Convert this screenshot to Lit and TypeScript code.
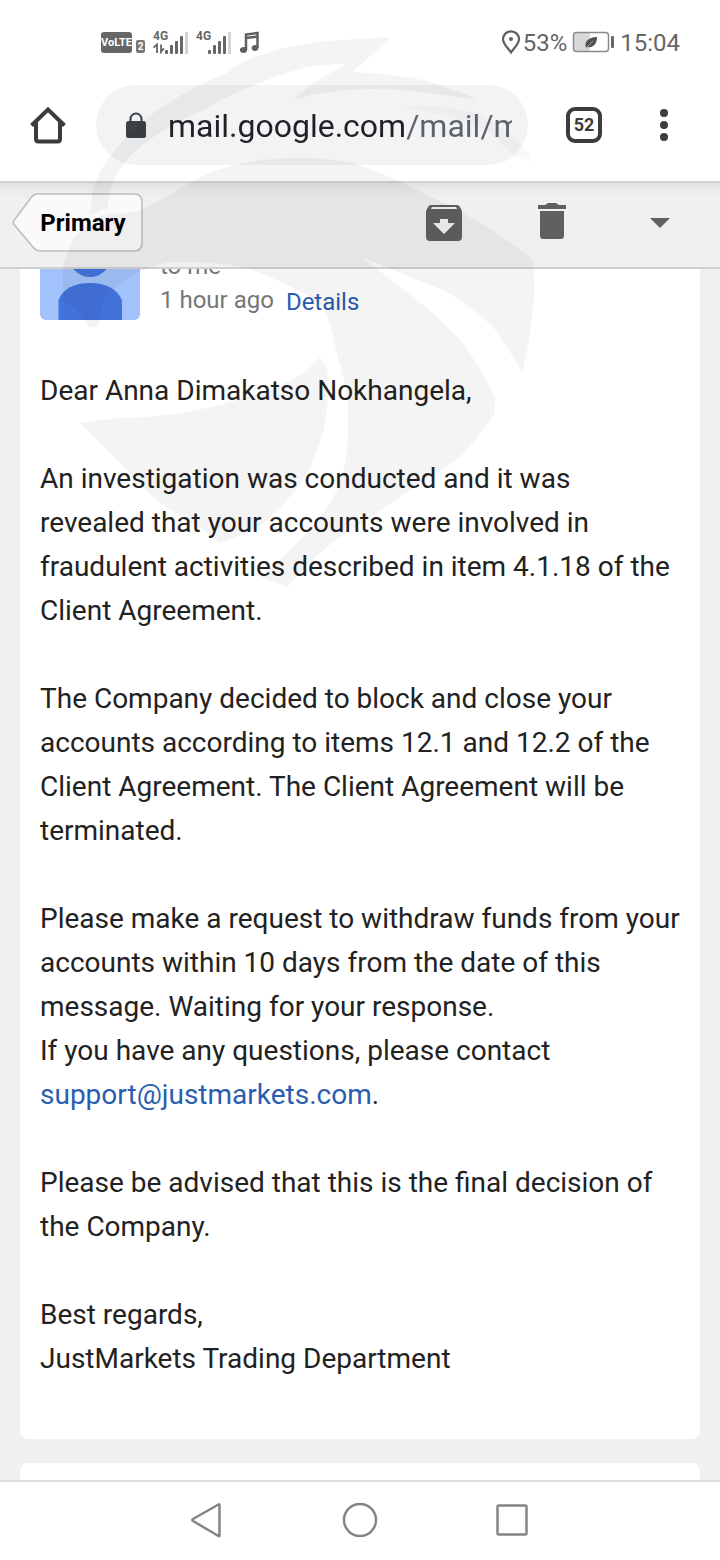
import { LitElement, html, css, svg } from "lit";
import { customElement } from "lit/decorators.js";

@customElement("status-bar")
class StatusBar extends LitElement {
  static styles = css`
    :host {
      display: flex;
      align-items: center;
      justify-content: space-between;
      height: 85px;
      box-sizing: border-box;
      padding: 0 40px 0 101px;
      color: #666;
      font-size: 24px;
      line-height: 28px;
    }
    .group { display: flex; align-items: center; }
    .left { gap: 8px; }
    .right { gap: 5px; }
    .place { gap: 1px; }
    .volte { display: flex; align-items: flex-end; gap: 4px; }
    .badge {
      background: #666;
      color: #fff;
      border-radius: 3px;
      width: 31px;
      font: 700 11px/21px Roboto, sans-serif;
      text-align: center;
    }
    .slot {
      background: #777;
      color: #fff;
      border-radius: 2px;
      width: 9px;
      font: 700 10px/13px Roboto, sans-serif;
      text-align: center;
    }
    svg { display: block; }
    .net { font: 700 12px Roboto, sans-serif; fill: #666; }
  `;

  private signal(data: boolean) {
    return svg`
      <text class="net" x="0" y="10">4G</text>
      ${data
        ? svg`<path d="M.5 17.500L4 14.500V23M8 14.500v9M7.500 22l3.500-3.500" fill="none" stroke="#666" stroke-width="1.800"/>`
        : null}
      <g fill="#666">
        <rect x="12" y="20" width="3" height="4" rx="1"/>
        <rect x="17" y="15" width="3" height="9" rx="1"/>
        <rect x="22" y="11" width="3" height="13" rx="1"/>
        <rect x="27" y="6" width="3" height="18" rx="1"/>
      </g>
      <rect x="32" y="2" width="3" height="22" fill="#d4d4d4"/>`;
  }

  render() {
    return html`
      <div class="group left">
        <span class="volte"><span class="badge">VoLTE</span><span class="slot">2</span></span>
        <svg width="35" height="26" viewBox="0 0 35 26">${this.signal(true)}</svg>
        <svg width="35" height="26" viewBox="0 0 35 26">${this.signal(false)}</svg>
        <svg width="21" height="24" viewBox="0 0 21 24" fill="none" stroke="#5f5f5f">
          <path d="M7 19V3.500L18.500 2v15M7 7l11.500-1.500" stroke-width="2.500"/>
          <ellipse cx="4.500" cy="19" rx="3.200" ry="2.500" fill="#5f5f5f"/>
          <ellipse cx="16" cy="17" rx="3" ry="2.500" fill="#5f5f5f"/>
        </svg>
      </div>
      <div class="group right">
        <div class="group place">
          <svg width="22" height="26" viewBox="0 0 22 26">
            <path d="M11 22.500C8 18 3 14 3 9.300a8 8 0 0 1 16 0C19 14 14 18 11 22.500z" fill="none" stroke="#606060" stroke-width="2.200"/>
            <circle cx="11" cy="9" r="2" fill="#606060"/>
          </svg>
          <span>53%</span>
        </div>
        <svg width="43" height="24" viewBox="0 0 43 24">
          <rect x="2" y="2" width="16" height="18" rx="2" fill="#d8d8d8"/>
          <rect x="1.500" y="1.500" width="35" height="19" rx="3" fill="none" stroke="#8a8a8a" stroke-width="1.500"/>
          <rect x="39" y="5" width="3" height="12" rx="1" fill="#666"/>
          <path d="M14 17c-2-6 2-11 11-11 0 7-4 11-9 10z" fill="#505050"/>
          <path d="M13.500 17.500L21 10" stroke="#aaa" fill="none"/>
        </svg>
        <span>15:04</span>
      </div>`;
  }
}

@customElement("browser-bar")
class BrowserBar extends LitElement {
  static styles = css`
    :host {
      display: flex;
      align-items: center;
      height: 96px;
      box-sizing: border-box;
      padding: 0 36px 16px 28px;
    }
    button {
      border: 0;
      padding: 0;
      background: none;
      display: flex;
      justify-content: center;
      align-items: center;
      height: 40px;
      width: 40px;
      flex: none;
    }
    .pill {
      flex: 1;
      min-width: 0;
      display: flex;
      align-items: center;
      gap: 20px;
      height: 80px;
      box-sizing: border-box;
      border-radius: 40px;
      background: #f1f3f4;
      padding: 0 16px 0 28px;
      margin-left: 28px;
      margin-right: 38px;
    }
    .pill svg { flex: none; }
    input {
      flex: 1;
      min-width: 0;
      height: 44px;
      border: 0;
      padding: 2px 0 0;
      box-sizing: border-box;
      outline: 0;
      color: transparent;
      background: linear-gradient(90deg, #202124 236px, #5f6368 236px);
      background-clip: text;
      -webkit-background-clip: text;
      font: 32px/42px Roboto, sans-serif;
    }
    .tabs {
      width: 36px;
      height: 36px;
      box-sizing: border-box;
      border: 4px solid #3c3c3c;
      border-radius: 9px;
      color: #3c3c3c;
      font: 700 18px/28px Roboto, sans-serif;
    }
    .more { margin-left: 42px; }
  `;

  render() {
    return html`
      <button aria-label="Home">
        <svg width="40" height="40" viewBox="0 0 40 40" fill="none" stroke="#3c3c3c" stroke-width="4">
          <path d="M3.500 20.500L20 4.500l16.500 16"/>
          <path d="M8 17v17q0 2.500 2.500 2.500h19q2.500 0 2.500-2.500V17"/>
        </svg>
      </button>
      <div class="pill">
        <svg width="24" height="28" viewBox="0 0 24 28">
          <rect x="2" y="10" width="20" height="17" rx="2.500" fill="#3c4043"/>
          <path d="M6.500 11V8a5.500 5.500 0 0 1 11 0v3" fill="none" stroke="#3c4043" stroke-width="2"/>
        </svg>
        <input aria-label="Address" value="mail.google.com/mail/m" />
      </div>
      <button class="tabs" aria-label="52 open tabs">52</button>
      <button class="more" aria-label="More">
        <svg width="10" height="34" viewBox="0 0 10 34" fill="#3c3c3c">
          <circle cx="5" cy="5" r="4"/><circle cx="5" cy="17" r="4"/><circle cx="5" cy="29" r="4"/>
        </svg>
      </button>`;
  }
}

@customElement("mail-toolbar")
class MailToolbar extends LitElement {
  static styles = css`
    :host {
      display: flex;
      align-items: center;
      height: 88px;
      box-sizing: border-box;
      padding: 0 40px 2px 12px;
      border-bottom: 2px solid #cfcfcf;
      background: linear-gradient(#cbcbcb 0, #e2e2e2 3px, #ececec 10px, #f0f0f0 18px);
    }
    button {
      border: 0;
      padding: 0;
      background: none;
      flex: none;
      height: 60px;
      width: 40px;
      display: grid;
      place-items: center;
    }
    svg { display: block; }
    .back {
      width: 132px;
      margin-right: auto;
      font: 700 24px/28px Roboto, sans-serif;
      color: #000;
    }
    .back svg, .back span { grid-area: 1 / 1; }
    .back span { padding-left: 10px; }
    .archive, .trash { margin-right: 68px; }
  `;

  render() {
    return html`
      <button class="back">
        <svg width="132" height="60" viewBox="0 0 132 60">
          <path d="M25 1h97q8 0 8 8v41q0 8-8 8H29q-5 0-8-4L2 31.500q-1.500-2 0-4L18 6q3.500-5 7-5z" fill="#fafafa" stroke="#bdbdbd" stroke-width="1.500"/>
        </svg>
        <span>Primary</span>
      </button>
      <button class="archive" aria-label="Archive">
        <svg width="36" height="36" viewBox="0 0 36 36">
          <path d="M5 0h26q2 0 3 2l2 4v26q0 4-4 4H4q-4 0-4-4V6l2-4q1-2 3-2z" fill="#606060"/>
          <path d="M6 2h24l1 2H5zM14 14h8v4h7L18 29 7 18h7z" fill="#f3f3f3"/>
        </svg>
      </button>
      <button class="trash" aria-label="Delete">
        <svg width="28" height="40" viewBox="0 0 28 40" fill="#606060">
          <path d="M0 2h7l3-2h8l3 2h7v4H0zM2 8h24v25q0 3-3 3H5q-3 0-3-3z"/>
        </svg>
      </button>
      <button aria-label="More actions">
        <svg width="20" height="10" viewBox="0 0 20 10"><path d="M0 0h20L10 10z" fill="#606060"/></svg>
      </button>`;
  }
}

@customElement("mail-message")
class MailMessage extends LitElement {
  static styles = css`
    :host {
      display: block;
      background: #fff;
      border-radius: 0 0 8px 8px;
      padding: 0 20px 58px;
      color: #222;
      font-size: 28px;
      line-height: 44px;
    }
    .head {
      display: flex;
      align-items: flex-end;
      gap: 20px;
      height: 51px;
      overflow: hidden;
      margin-bottom: 49px;
      font-size: 24px;
      line-height: 32px;
      color: #777;
    }
    .head svg { display: block; flex: none; }
    .when { display: flex; gap: 12px; padding-top: 2px; }
    .when a { padding-top: 2px; }
    .meta { padding-bottom: 2px; }
    a { color: #2a5db0; text-decoration: none; }
    p { margin: 0 0 44px; }
    p:last-child { margin: 0; }
  `;

  render() {
    return html`
      <div class="head">
        <svg width="100" height="100" viewBox="0 0 100 100">
          <rect width="100" height="100" rx="6" fill="#a1c2fa"/>
          <circle cx="50" cy="36" r="21" fill="#4272db"/>
          <path d="M18.500 100V80Q26 63 50 63T82 80V100z" fill="#4272db"/>
        </svg>
        <div class="meta">
          <div>to me</div>
          <div class="when"><span>1 hour ago</span><a href="#details">Details</a></div>
        </div>
      </div>
      <div class="body">
        <p>Dear Anna Dimakatso Nokhangela,</p>
        <p>An investigation was conducted and it was<br />revealed that your accounts were involved in<br />fraudulent activities described in item 4.1.18 of the<br />Client Agreement.</p>
        <p>The Company decided to block and close your<br />accounts according to items 12.1 and 12.2 of the<br />Client Agreement. The Client Agreement will be<br />terminated.</p>
        <p>Please make a request to withdraw funds from your<br />accounts within 10 days from the date of this<br />message. Waiting for your response.<br />If you have any questions, please contact<br /><a href="mailto:support@justmarkets.com">support@justmarkets.com</a>.</p>
        <p>Please be advised that this is the final decision of<br />the Company.</p>
        <p>Best regards,<br />JustMarkets Trading Department</p>
      </div>`;
  }
}

@customElement("system-nav")
class SystemNav extends LitElement {
  static styles = css`
    :host {
      display: flex;
      justify-content: center;
      align-items: center;
      gap: 112px;
      height: 80px;
      box-sizing: border-box;
      border-top: 2px solid #e0e0e0;
      padding-bottom: 2px;
      background: #fff;
    }
    button { border: 0; padding: 0; background: none; width: 40px; height: 40px; }
    svg { display: block; fill: none; stroke: #858585; stroke-width: 2.5; stroke-linejoin: round; }
  `;

  render() {
    return html`
      <button aria-label="Back">
        <svg width="40" height="40" viewBox="0 0 40 40"><path d="M31.500 5q0-1-1-.5L5 19q-1.500 1 0 2l25.500 15q1 .5 1-.5z"/></svg>
      </button>
      <button aria-label="Home">
        <svg width="40" height="40" viewBox="0 0 40 40"><circle cx="20" cy="20" r="16"/></svg>
      </button>
      <button aria-label="Recent apps">
        <svg width="40" height="40" viewBox="0 0 40 40"><rect x="5.500" y="5.500" width="29" height="29" rx="1"/></svg>
      </button>`;
  }
}

@customElement("app-root")
class AppRoot extends LitElement {
  static styles = css`
    :host {
      display: flex;
      flex-direction: column;
      min-height: 100vh;
      position: relative;
      background: #fff;
      font-family: Roboto, sans-serif;
    }
    .page {
      flex: 1;
      display: flex;
      flex-direction: column;
      gap: 24px;
      padding: 0 20px;
      background: #f0f0f0;
    }
    .next { flex: 1; background: #fff; border-radius: 8px 8px 0 0; }
    .mark {
      position: absolute;
      top: 0;
      left: 0;
      pointer-events: none;
      fill: #000;
      opacity: 0.038;
    }
  `;

  render() {
    return html`
      <status-bar></status-bar>
      <browser-bar></browser-bar>
      <mail-toolbar></mail-toolbar>
      <main class="page">
        <mail-message></mail-message>
        <div class="next"></div>
      </main>
      <system-nav></system-nav>
      <svg class="mark" width="560" height="600" viewBox="0 0 560 600" aria-hidden="true">
        <path d="M391 37L343 40Q300 42 267 53T227 73Q190 88 177 98 155 110 137 127 120 142 110 157 96 175 92 192L90 215 108 208Q110 180 127 160 140 145 160 133 180 120 207 108 235 92 260 83 285 72 313 66L347 63 313 83 293 100Q320 92 347 90 385 87 420 92L477 100Q468 94 453 90 435 82 413 78 390 74 353 72z"/>
        <path d="M405 108Q450 103 482 116 512 132 531 156L531 163Q524 157 514 156L502 144Q480 118 405 108z" opacity=".6"/>
        <path d="M90 328Q78 310 63 300V267L72 240Q85 225 103 215L140 211 190 183Q215 167 260 160 310 155 347 162 380 169 443 203 495 228 533 260 538 310 522 373 510 350 493 327 470 305 443 290L393 270 363 258 413 297Q440 317 460 340 480 365 495 397V413Q480 436 460 457 440 472 420 483L377 513Q350 530 327 547 305 567 287 587L260 577Q277 563 293 547 315 525 327 507 348 480 348 425 350 395 337 355 332 327 323 307 310 293 253 270 225 261 170 262 130 270 105 298L98 326z"/>
        <path d="M80 423Q110 418 143 417 180 415 210 407 250 398 277 387 305 375 320 357L327 367Q332 420 313 460 305 482 287 500 268 522 247 533L220 543 203 530Q175 515 153 497L117 460z"/>
      </svg>`;
  }
}
